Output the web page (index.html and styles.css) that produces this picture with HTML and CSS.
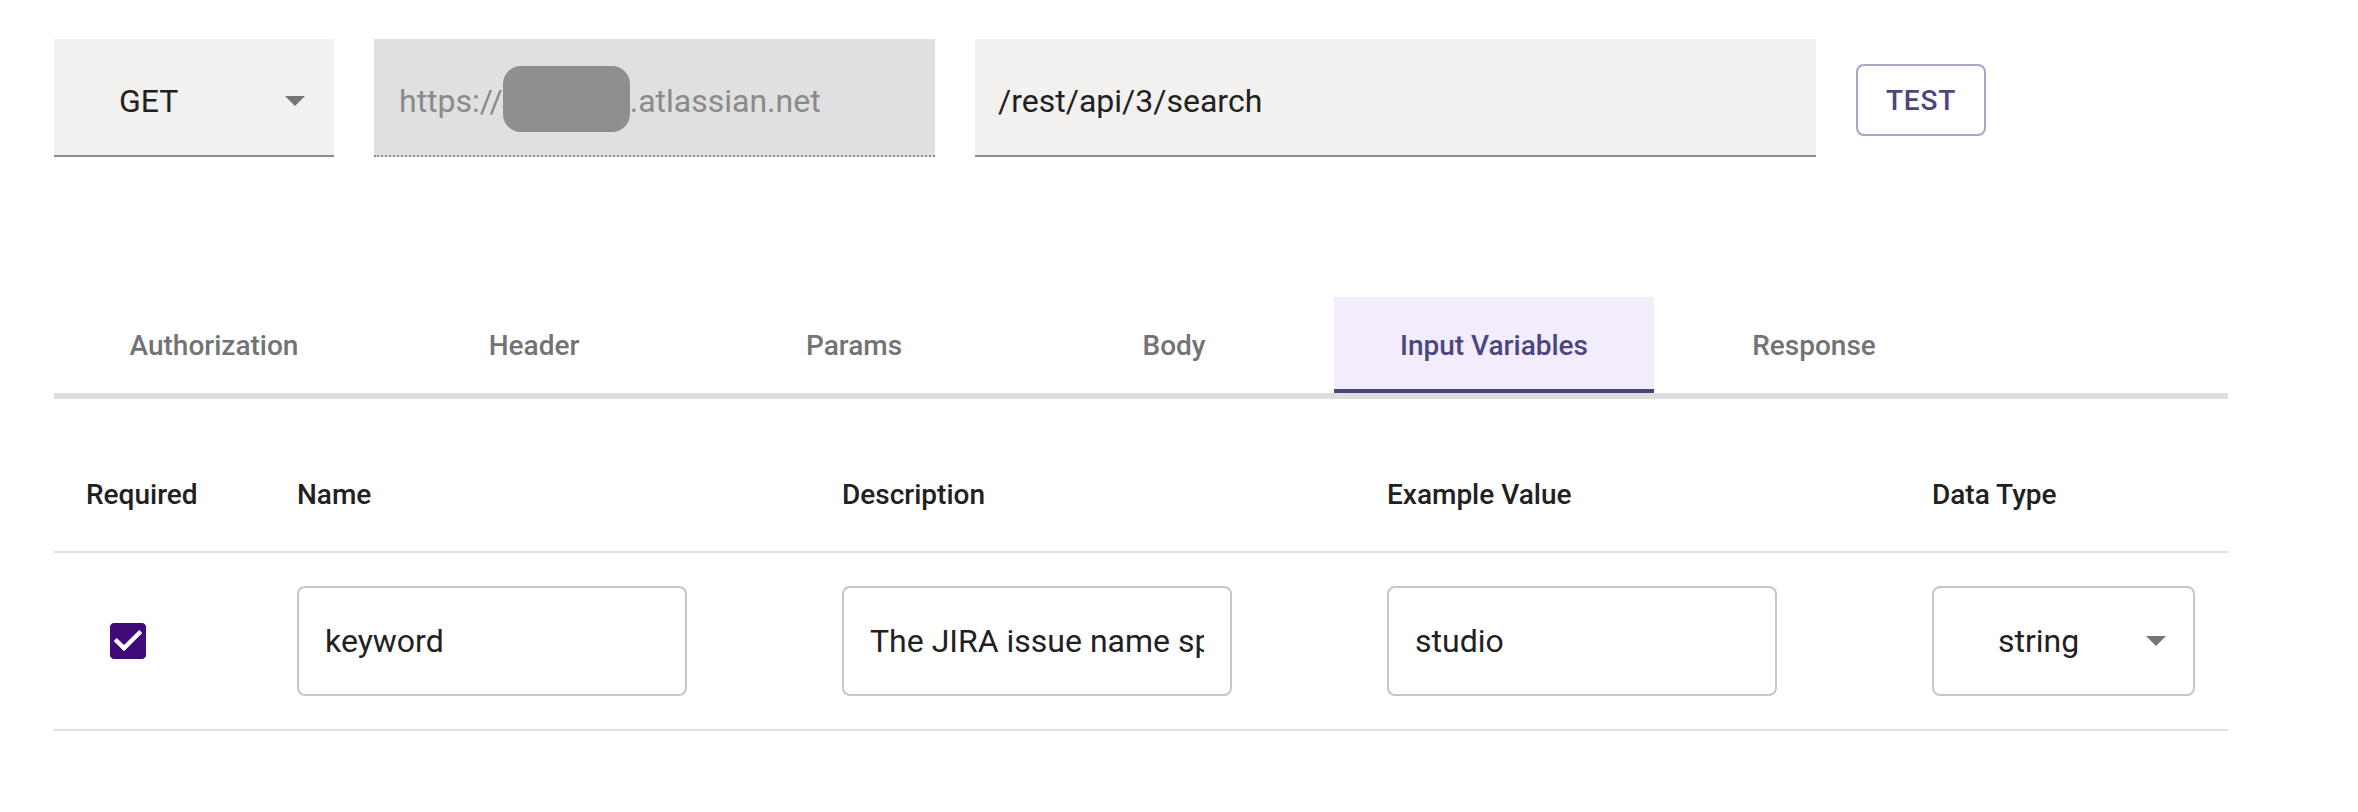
FILE: index.html
```html
<!DOCTYPE html>
<html lang="en">
<head>
<meta charset="utf-8">
<title>API Request</title>
<link rel="stylesheet" href="styles.css">
</head>
<body>
<div class="page">
  <div class="request-row">
    <div class="field select-field method">
      <span class="field-text">GET</span>
      <svg class="drop" viewBox="0 0 20 10" width="20" height="10"><path d="M0 0h20L10 10z" fill="#757575"/></svg>
    </div>
    <div class="field base-url">
      <span class="field-text muted">https://<span class="redact"></span>.atlassian.net</span>
    </div>
    <div class="field path">
      <span class="field-text">/rest/api/3/search</span>
    </div>
    <button class="test-btn" type="button">TEST</button>
  </div>

  <div class="tabs">
    <div class="tab-list">
      <div class="tab">Authorization</div>
      <div class="tab">Header</div>
      <div class="tab">Params</div>
      <div class="tab">Body</div>
      <div class="tab active">Input Variables</div>
      <div class="tab">Response</div>
    </div>
    <div class="tab-rule"></div>
  </div>

  <div class="table">
    <div class="row head">
      <div class="cell">Required</div>
      <div class="cell">Name</div>
      <div class="cell">Description</div>
      <div class="cell">Example Value</div>
      <div class="cell">Data Type</div>
    </div>
    <div class="row body">
      <div class="cell">
        <span class="check">
          <svg viewBox="0 0 24 24" width="48" height="48"><path fill="#3e0b78" d="M19 3H5c-1.11 0-2 .9-2 2v14c0 1.1.89 2 2 2h14c1.11 0 2-.9 2-2V5c0-1.1-.89-2-2-2zm-9 14l-5-5 1.41-1.41L10 14.17l7.59-7.59L19 8l-9 9z"/><path fill="#fff" d="M10 17l-5-5 1.41-1.41L10 14.17l7.59-7.59L19 8l-9 9z"/></svg>
        </span>
      </div>
      <div class="cell"><div class="box"><span class="box-text">keyword</span></div></div>
      <div class="cell"><div class="box"><span class="box-text">The JIRA issue name space</span></div></div>
      <div class="cell"><div class="box"><span class="box-text">studio</span></div></div>
      <div class="cell">
        <div class="box type">
          <span class="box-text">string</span>
          <svg class="drop" viewBox="0 0 20 10" width="20" height="10"><path d="M0 0h20L10 10z" fill="#757575"/></svg>
        </div>
      </div>
    </div>
  </div>
</div>
</body>
</html>
```

FILE: styles.css
```css
* { box-sizing: border-box; }

html, body {
  margin: 0;
  background: #ffffff;
  font-family: Roboto, "Noto Sans", "Liberation Sans", sans-serif;
  color: #212121;
}

.page {
  padding: 39px 0 0 54px;
  width: 2228px;
}

/* ---------- request row ---------- */
.request-row {
  display: flex;
  align-items: center;
  gap: 40px;
}

.field {
  height: 118px;
  display: flex;
  align-items: center;
  padding-top: 8px;
  border-bottom: 2px solid #8c8c8c;
  background: #f2f1ef;
  font-size: 32px;
}

.field-text {
  white-space: nowrap;
  display: inline-flex;
  align-items: center;
}

.method {
  width: 280px;
  padding-left: 65px;
  padding-right: 29px;
  justify-content: space-between;
}

.base-url {
  width: 561px;
  padding-left: 25px;
  background: #e0e0e0;
  border-bottom: 2px dotted #8c8c8c;
}

.muted { color: #8a8a8a; }

.redact {
  display: inline-block;
  width: 127px;
  height: 66px;
  border-radius: 18px;
  background: #8f8f8f;
  margin-top: -4px;
}

.path {
  width: 841px;
  padding-left: 23px;
}

.test-btn {
  width: 130px;
  height: 72px;
  margin-top: 4px;
  background: #ffffff;
  border: 2px solid #aaa6c8;
  border-radius: 8px;
  color: #4b4680;
  font-family: Roboto, "Noto Sans", "Liberation Sans", sans-serif;
  font-size: 28px;
  font-weight: 500;
  letter-spacing: 0.8px;
  padding: 0;
}

/* ---------- tabs ---------- */
.tabs {
  margin-top: 140px;
}

.tab-list {
  display: flex;
}

.tab {
  position: relative;
  width: 320px;
  height: 96px;
  display: flex;
  align-items: center;
  justify-content: center;
  padding-top: 1px;
  font-size: 28px;
  font-weight: 500;
  color: #737373;
}

.tab.active {
  background: #f3ecfc;
  color: #4b4680;
}

.tab.active::after {
  content: "";
  position: absolute;
  left: 0;
  right: 0;
  bottom: 0;
  height: 4px;
  background: #4b4680;
}

.tab-rule {
  height: 6px;
  background: #dedede;
}

/* ---------- table ---------- */
.table {
  margin-top: 38px;
}

.row {
  display: grid;
  grid-template-columns: 211px 545px 545px 545px 1fr;
  border-bottom: 2px solid #e0e0e0;
}

.row.head {
  height: 116px;
  align-items: center;
  font-size: 28px;
  font-weight: 500;
  color: #212121;
}

.row.body {
  height: 178px;
  align-items: center;
}

.cell {
  padding-left: 32px;
  display: flex;
  align-items: center;
}

.check {
  display: flex;
  padding: 18px;
}

.check svg { display: block; }

.box {
  width: 390px;
  height: 110px;
  border: 2px solid #c6c6c6;
  border-radius: 8px;
  padding: 0 26px 0 26px;
  display: flex;
  align-items: center;
  font-size: 32px;
  color: #212121;
  overflow: hidden;
}

.box-text {
  display: block;
  white-space: nowrap;
  overflow: hidden;
  min-width: 0;
  flex: 1;
}

.box.type {
  width: 263px;
  padding-left: 64px;
  padding-right: 27px;
}

.drop { display: block; flex: none; }
```
